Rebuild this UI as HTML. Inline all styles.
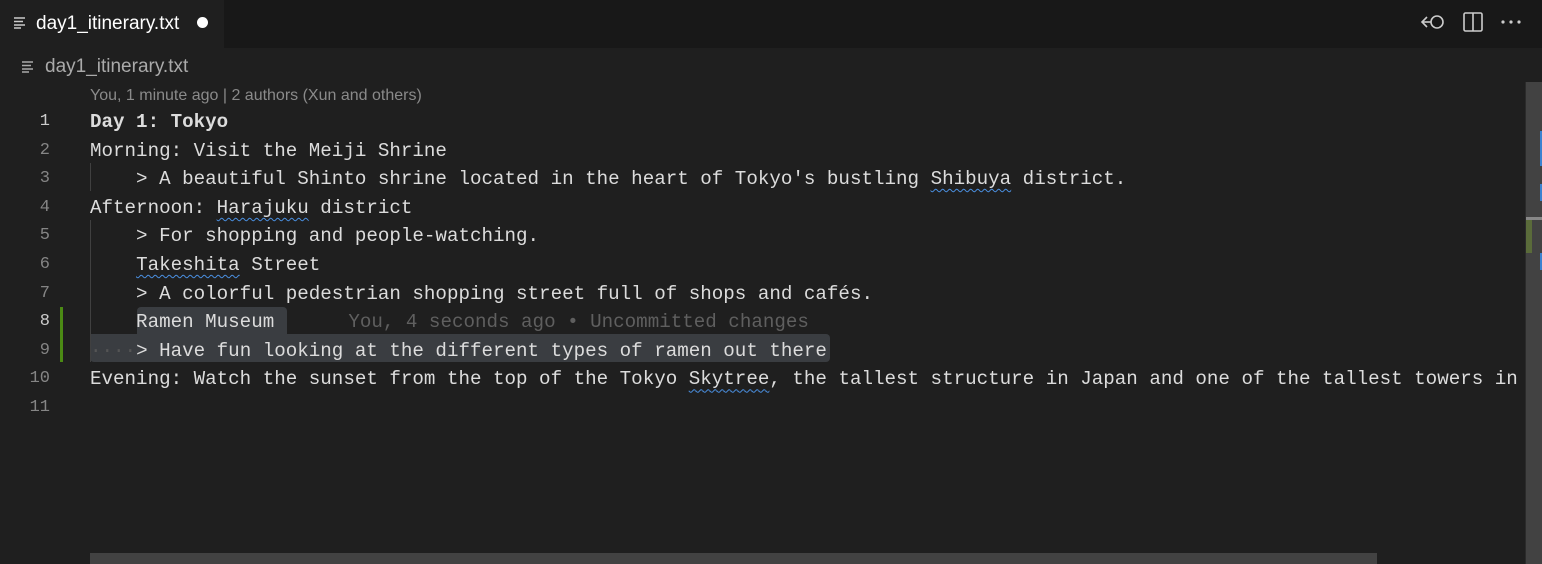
<!DOCTYPE html>
<html><head><style>
body{margin:0;width:1542px;height:564px;background:#1f1f1f;overflow:hidden;position:relative;font-family:"Liberation Sans",sans-serif;}
.tabs{position:absolute;left:0;top:0;width:1542px;height:48px;background:#181818;}
.tab{position:absolute;left:0;top:0;width:224px;height:48px;background:#1f1f1f;}
.mono{font-family:"Liberation Mono",monospace;font-size:19.2px;white-space:pre;}
.line{position:absolute;left:90px;right:17px;overflow:hidden;height:28.6px;line-height:28.6px;color:#dcdcdc;}
.ln{position:absolute;width:50px;text-align:right;left:0;height:28.6px;line-height:28.6px;color:#858585;font-family:"Liberation Mono",monospace;font-size:17px;}
.sq{text-decoration:underline wavy #4a90e2;text-decoration-thickness:1px;text-underline-offset:4px;}
</style></head><body>
<div class="tabs"><div class="tab">
<svg style="position:absolute;left:14px;top:17px" width="12" height="12"><g stroke="#ccc" stroke-width="1.5"><line x1="0" y1="1" x2="11" y2="1"/><line x1="0" y1="4.5" x2="9" y2="4.5"/><line x1="0" y1="8" x2="11" y2="8"/><line x1="0" y1="11" x2="7" y2="11"/></g></svg>
<div style="position:absolute;left:36px;top:13px;font-size:19px;color:#fff">day1_itinerary.txt</div>
<div style="position:absolute;left:197px;top:17px;width:11px;height:11px;border-radius:50%;background:#fff"></div>
</div>
<svg style="position:absolute;left:1420px;top:11px" width="28" height="22"><path d="M7 6 L2 11 L7 16" stroke="#ccc" stroke-width="1.6" fill="none"/><line x1="2" y1="11" x2="11" y2="11" stroke="#ccc" stroke-width="1.6"/><circle cx="17" cy="11" r="6" stroke="#ccc" stroke-width="1.6" fill="none"/></svg>
<svg style="position:absolute;left:1463px;top:12px" width="20" height="21"><rect x="1" y="1" width="18" height="18" rx="1.5" stroke="#ccc" stroke-width="1.6" fill="none"/><line x1="10" y1="1" x2="10" y2="19" stroke="#ccc" stroke-width="1.6"/></svg>
<svg style="position:absolute;left:1500px;top:19px" width="22" height="6"><circle cx="3" cy="3" r="1.6" fill="#ccc"/><circle cx="11" cy="3" r="1.6" fill="#ccc"/><circle cx="19" cy="3" r="1.6" fill="#ccc"/></svg>
</div>
<svg style="position:absolute;left:22px;top:61px" width="12" height="12"><g stroke="#aaa" stroke-width="1.5"><line x1="0" y1="1" x2="11" y2="1"/><line x1="0" y1="4.5" x2="9" y2="4.5"/><line x1="0" y1="8" x2="11" y2="8"/><line x1="0" y1="11" x2="7" y2="11"/></g></svg>
<div style="position:absolute;left:45px;top:56px;font-size:19px;color:#aaa">day1_itinerary.txt</div>
<div style="position:absolute;left:90px;top:87px;font-size:16px;color:#8a8a8a">You, 1 minute ago | 2 authors (Xun and others)</div>
<div style="position:absolute;left:137px;top:307px;width:150px;height:28px;background:#3a3d41;border-radius:4px 4px 0 0"></div>
<div style="position:absolute;left:90px;top:334px;width:740px;height:28px;background:#3a3d41;border-radius:0 4px 4px 4px"></div>
<div style="position:absolute;left:60px;top:307px;width:3px;height:55px;background:#4b8a14"></div>
<div style="position:absolute;left:90px;top:163px;width:1px;height:28px;background:#404040"></div>
<div style="position:absolute;left:90px;top:220px;width:1px;height:142px;background:#404040"></div>
<div class="ln" style="top:108px;color:#ccc">1</div><div class="line mono" style="top:108px;font-weight:bold">Day 1: Tokyo</div>
<div class="ln" style="top:136.6px">2</div><div class="line mono" style="top:136.6px">Morning: Visit the Meiji Shrine</div>
<div class="ln" style="top:165.2px">3</div><div class="line mono" style="top:165.2px">    &gt; A beautiful Shinto shrine located in the heart of Tokyo's bustling <span class="sq">Shibuya</span> district.</div>
<div class="ln" style="top:193.8px">4</div><div class="line mono" style="top:193.8px">Afternoon: <span class="sq">Harajuku</span> district</div>
<div class="ln" style="top:222.4px">5</div><div class="line mono" style="top:222.4px">    &gt; For shopping and people-watching.</div>
<div class="ln" style="top:251px">6</div><div class="line mono" style="top:251px">    <span class="sq">Takeshita</span> Street</div>
<div class="ln" style="top:279.6px">7</div><div class="line mono" style="top:279.6px">    &gt; A colorful pedestrian shopping street full of shops and cafés.</div>
<div class="ln" style="top:308.2px;color:#ccc">8</div><div class="line mono" style="top:308.2px">    Ramen Museum      <span style="color:#5f5f5f;margin-left:5px">You, 4 seconds ago • Uncommitted changes</span></div>
<div class="ln" style="top:336.8px">9</div><div class="line mono" style="top:336.8px"><span style="color:#555">····</span>&gt; Have fun looking at the different types of ramen out there</div>
<div class="ln" style="top:365.4px">10</div><div class="line mono" style="top:365.4px">Evening: Watch the sunset from the top of the Tokyo <span class="sq">Skytree</span>, the tallest structure in Japan and one of the tallest towers in the world.</div>
<div class="ln" style="top:394px">11</div>
<div style="position:absolute;left:1525px;top:82px;width:17px;height:482px;background:#424242;border-left:1px solid #2b2b2b"></div>
<div style="position:absolute;left:1540px;top:131px;width:2px;height:35px;background:#3b82d0"></div>
<div style="position:absolute;left:1540px;top:184px;width:2px;height:17px;background:#3b82d0"></div>
<div style="position:absolute;left:1540px;top:253px;width:2px;height:17px;background:#3b82d0"></div>
<div style="position:absolute;left:1526px;top:217px;width:16px;height:3px;background:#888"></div>
<div style="position:absolute;left:1526px;top:220px;width:6px;height:33px;background:#5a6b3a"></div>
<div style="position:absolute;left:90px;top:553px;width:1287px;height:11px;background:#424242"></div>
</body></html>
